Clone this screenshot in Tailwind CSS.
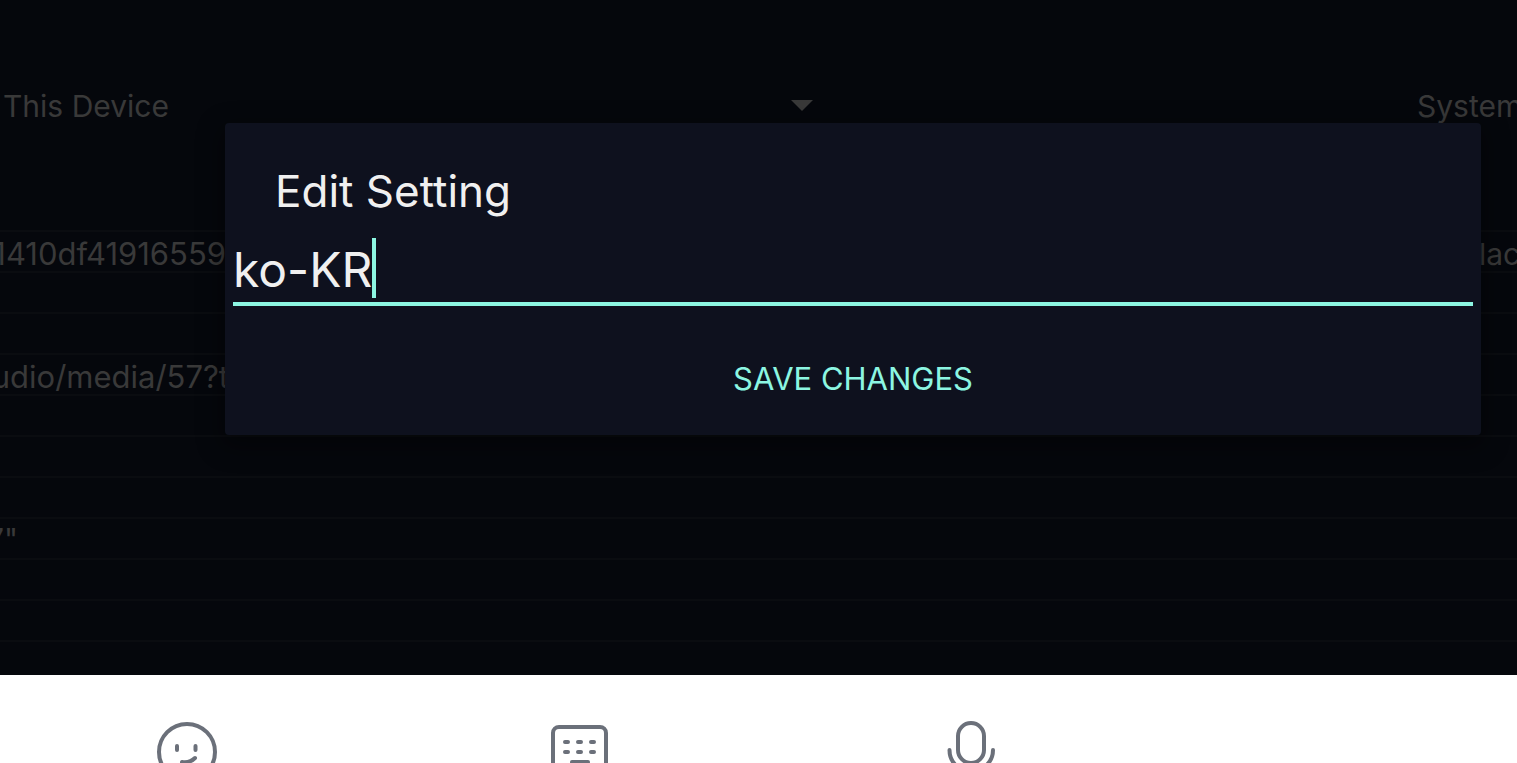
<!DOCTYPE html>
<html lang="en">
<head>
  <meta charset="UTF-8" />
  <meta name="viewport" content="width=device-width, initial-scale=1.0"/>
  <title>Edit Setting</title>
  <script src="https://cdn.jsdelivr.net/npm/@tailwindcss/browser@4"></script>
</head>
<body class="relative flex flex-col h-screen overflow-hidden bg-[#05070c] font-['Inter',sans-serif] font-normal text-[#393939]">

  <!-- Settings page behind the dialog -->
  <main class="flex-1 min-h-0 overflow-hidden text-[30px] leading-10 whitespace-nowrap">
    <div class="flex pt-[86px] h-[230px]">
      <button class="flex items-start justify-between w-[813px] pl-[3px] text-left">
        This Device
        <svg class="w-[22px] h-3 mt-[13px]" viewBox="0 0 22 12" fill="#393939"><path d="M0 1h22L11 12z"/></svg>
      </button>
      <div class="flex-1 flex justify-end"><span class="w-[100px]">System</span></div>
    </div>

    <!-- Setting rows -->
    <div class="*:h-[41px] *:border-t-2 *:border-[#0a0c10]">
      <div class="flex justify-between items-center pt-1">
        <span class="w-[226px] flex justify-end text-[31px]">1410df41916559</span>
        <span class="w-[38px]">lac</span>
      </div>
      <div></div>
      <div></div>
      <div class="flex items-center pt-1"><span class="w-[229px] flex justify-end text-[31px]">udio/media/57?t</span></div>
      <div></div>
      <div></div>
      <div></div>
      <div class="flex items-center"><span class="w-[18px] flex justify-end">7"</span></div>
      <div></div>
      <div></div>
      <div></div>
    </div>
  </main>

  <!-- Keyboard toolbar -->
  <footer class="h-[88px] shrink-0 overflow-hidden bg-white flex text-[#6b707a]">
    <div class="flex w-full pl-[155px]">
      <button aria-label="Emoji" class="mt-[45px] w-16 h-16 shrink-0">
        <svg viewBox="0 0 64 64" fill="none" stroke="currentColor" stroke-width="4" stroke-linecap="round"><circle cx="32" cy="32" r="28"/><path d="M22 26v4M40.500 26v4M27 42c6 1 10-1 13-4"/></svg>
      </button>
      <button aria-label="Keyboard" class="mt-[45px] ml-[329px] w-16 h-16 shrink-0">
        <svg viewBox="0 0 64 64" fill="none" stroke="currentColor" stroke-width="4" stroke-linecap="round"><rect x="5" y="7" width="53" height="50" rx="6"/><path d="M17 22h3M30 22h3M43 22h3M17 32h3M30 32h3M43 32h3M24 42h16"/></svg>
      </button>
      <button aria-label="Voice input" class="mt-[45px] ml-[328px] w-16 h-16 shrink-0">
        <svg viewBox="0 0 64 64" fill="none" stroke="currentColor" stroke-width="4" stroke-linecap="round"><rect x="18" y="3" width="26" height="40" rx="13"/><path d="M9.500 30c0 12 9 21 21.500 21s22-9 22-21"/></svg>
      </button>
    </div>
  </footer>

  <!-- Dialog -->
  <div class="absolute inset-x-0 top-[123px] pl-[225px] pr-9">
    <form role="dialog" aria-labelledby="title" class="rounded-[4px] bg-[#0e111e] px-2 pt-10 pb-7 shadow-[0_8px_24px_4px_rgba(0,0,0,0.4)]">
      <label id="title" for="setting" class="block pl-[42px] text-[44px] leading-[56px] text-[#f0f0f0]">Edit Setting</label>
      <div class="flex items-end h-[87px] pb-1 border-b-4 border-[#8cf6e2]">
        <input id="setting" type="text" value="ko-KR" class="field-sizing-content h-[60px] pt-1 text-[48px] text-[#f0f0f0] outline-none">
        <span class="w-1 h-[60px] bg-[#8cf6e2]"></span>
      </div>
      <button type="button" class="block w-full mt-[45px] h-14 text-[31px] text-[#8cf6e2]">SAVE CHANGES</button>
    </form>
  </div>

</body>
</html>
